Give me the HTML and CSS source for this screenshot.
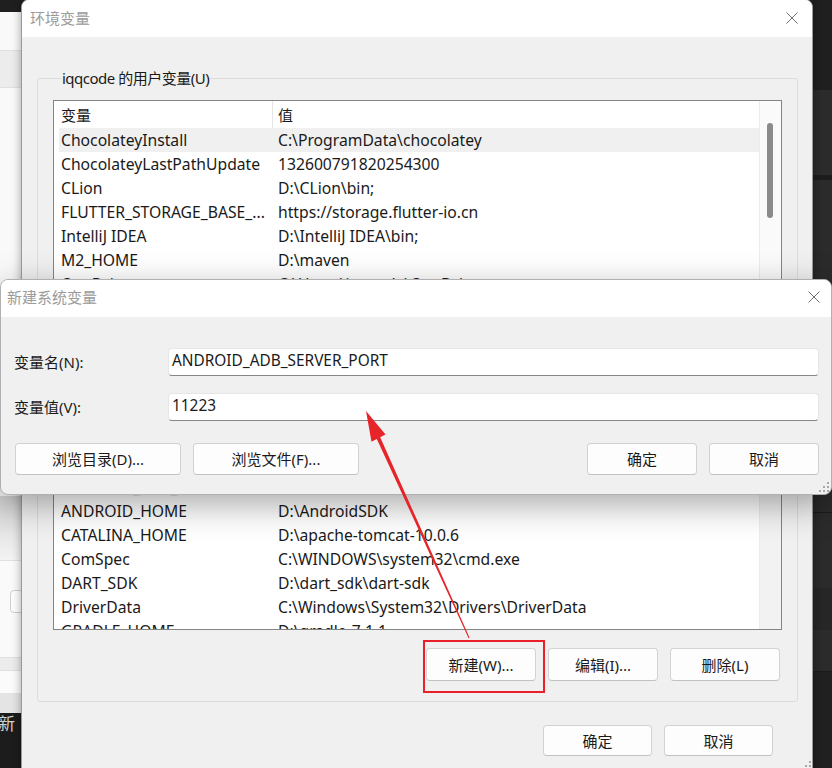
FILE: index.html
```html
<!DOCTYPE html>
<html lang="zh-CN">
<head>
<meta charset="utf-8">
<title>环境变量</title>
<link rel="stylesheet" href="styles.css">
</head>
<body>
<div class="desktop">
  <div class="bg-left">
    <div class="b b-dark12"></div>
    <div class="b b-38"></div>
    <div class="b b-line"></div>
    <div class="b b-36"></div>
    <div class="b b-line"></div>
    <div class="b b-408"></div>
    <div class="b b-64"></div>
    <div class="b b-line"></div>
    <div class="b b-96"><div class="bg-btn"></div></div>
    <div class="b b-line"></div>
    <div class="b b-12"></div>
    <div class="b b-line"></div>
    <div class="b b-22"></div>
    <div class="b b-20"></div>
    <div class="b b-55"><span class="bg-new">新</span></div>
  </div>
  <div class="bg-right">
    <div class="r r-90"></div>
    <div class="r r-85"></div>
    <div class="r r-5"></div>
    <div class="r r-332"></div>
    <div class="r r-1"></div>
    <div class="r r-75"></div>
    <div class="r r-42"></div>
    <div class="r r-41"></div>
    <div class="r r-1"></div>
    <div class="r r-rest"></div>
  </div>

  <div class="win win-main">
    <div class="titlebar">
      <span class="title">环境变量</span>
      <svg class="close" width="12" height="12" viewBox="0 0 12 12"><path d="M0.5 0.5L11.5 11.5M11.5 0.5L0.5 11.5" stroke="#707070" stroke-width="1" fill="none"/></svg>
    </div>
    <div class="main-body">
      <fieldset class="group group-user">
        <legend>iqqcode 的用户变量(U)</legend>
        <div class="list list-user">
          <div class="list-main">
            <div class="lhead"><span class="c1">变量</span><span class="c2">值</span></div>
            <div class="lrow sel"><span class="c1">ChocolateyInstall</span><span class="c2">C:\ProgramData\chocolatey</span></div>
            <div class="lrow"><span class="c1">ChocolateyLastPathUpdate</span><span class="c2">132600791820254300</span></div>
            <div class="lrow"><span class="c1">CLion</span><span class="c2">D:\CLion\bin;</span></div>
            <div class="lrow"><span class="c1">FLUTTER_STORAGE_BASE_...</span><span class="c2">https://storage.flutter-io.cn</span></div>
            <div class="lrow"><span class="c1">IntelliJ IDEA</span><span class="c2">D:\IntelliJ IDEA\bin;</span></div>
            <div class="lrow"><span class="c1">M2_HOME</span><span class="c2">D:\maven</span></div>
            <div class="lrow"><span class="c1">OneDrive</span><span class="c2">C:\Users\iqqcode\OneDrive</span></div>
            <div class="lrow"><span class="c1">Path</span><span class="c2">D:\Python\Scripts\;D:\Python\</span></div>
          </div>
          <div class="vscroll"><div class="thumb"></div></div>
        </div>
      </fieldset>

      <fieldset class="group group-sys">
        <legend>系统变量(S)</legend>
        <div class="list list-sys">
          <div class="list-main">
            <div class="lhead"><span class="c1">变量</span><span class="c2">值</span></div>
            <div class="lrow"><span class="c1">ACSetupSvcPort</span><span class="c2">23210</span></div>
            <div class="lrow"><span class="c1">ACSvcPort</span><span class="c2">17532</span></div>
            <div class="lrow"><span class="c1">ANDROID_ADB_HOME</span><span class="c2">D:\AndroidSDK\platform-tools</span></div>
            <div class="lrow"><span class="c1">ANDROID_AVD_HOME</span><span class="c2">D:\AndroidAVD</span></div>
            <div class="lrow"><span class="c1">ANDROID_HOME</span><span class="c2">D:\AndroidSDK</span></div>
            <div class="lrow"><span class="c1">CATALINA_HOME</span><span class="c2">D:\apache-tomcat-10.0.6</span></div>
            <div class="lrow"><span class="c1">ComSpec</span><span class="c2">C:\WINDOWS\system32\cmd.exe</span></div>
            <div class="lrow"><span class="c1">DART_SDK</span><span class="c2">D:\dart_sdk\dart-sdk</span></div>
            <div class="lrow"><span class="c1">DriverData</span><span class="c2">C:\Windows\System32\Drivers\DriverData</span></div>
            <div class="lrow"><span class="c1">GRADLE_HOME</span><span class="c2">D:\gradle-7.1.1</span></div>
          </div>
          <div class="vscroll vscroll-sys"></div>
        </div>
        <div class="btn-row">
          <button class="btn btn-sm">新建(W)...</button>
          <button class="btn btn-sm">编辑(I)...</button>
          <button class="btn btn-sm">删除(L)</button>
        </div>
      </fieldset>

      <div class="footer">
        <button class="btn btn-foot">确定</button>
        <button class="btn btn-foot">取消</button>
      </div>
    </div>
    <svg class="grip grip-main" width="10" height="10" viewBox="0 0 10 10"><g fill="#a8a8a8"><rect x="8" y="0" width="2" height="2"/><rect x="4" y="4" width="2" height="2"/><rect x="8" y="4" width="2" height="2"/><rect x="0" y="8" width="2" height="2"/><rect x="4" y="8" width="2" height="2"/><rect x="8" y="8" width="2" height="2"/></g></svg>
  </div>

  <div class="win win-new">
    <div class="titlebar titlebar-new">
      <span class="title">新建系统变量</span>
      <svg class="close" width="12" height="12" viewBox="0 0 12 12"><path d="M0.5 0.5L11.5 11.5M11.5 0.5L0.5 11.5" stroke="#707070" stroke-width="1" fill="none"/></svg>
    </div>
    <div class="new-body">
      <div class="form">
        <label class="flabel">变量名(N):</label>
        <div class="input">ANDROID_ADB_SERVER_PORT</div>
        <label class="flabel">变量值(V):</label>
        <div class="input">11223</div>
      </div>
      <div class="new-btns">
        <div class="btn-group">
          <button class="btn btn-wide">浏览目录(D)...</button>
          <button class="btn btn-wide">浏览文件(F)...</button>
        </div>
        <div class="btn-group">
          <button class="btn btn-sm">确定</button>
          <button class="btn btn-sm">取消</button>
        </div>
      </div>
    </div>
    <svg class="grip grip-new" width="10" height="10" viewBox="0 0 10 10"><g fill="#a8a8a8"><rect x="8" y="0" width="2" height="2"/><rect x="4" y="4" width="2" height="2"/><rect x="8" y="4" width="2" height="2"/><rect x="0" y="8" width="2" height="2"/><rect x="4" y="8" width="2" height="2"/><rect x="8" y="8" width="2" height="2"/></g></svg>
  </div>

  <div class="red-box"></div>
  <svg class="arrow" width="832" height="768" viewBox="0 0 832 768">
    <polygon fill="#e8242b" points="366,411 385.5,434.5 380.2,437.3 469.6,637.8 468.6,638.2 376.8,438.9 371.5,441.7"/>
  </svg>
</div>
</body>
</html>
```

FILE: styles.css
```css
* { box-sizing: border-box; margin: 0; padding: 0; }
html, body { width: 832px; height: 768px; overflow: hidden; }
body {
  font-family: "Noto Sans", "Noto Sans CJK SC", sans-serif;
  font-size: 15px;
  color: #1a1a1a;
  background: #2a2a2a;
}
.desktop { position: relative; width: 832px; height: 768px; overflow: hidden; }

/* background application on the left */
.bg-left { position: absolute; left: 0; top: 0; width: 40px; height: 768px; display: flex; flex-direction: column; }
.b { flex: none; position: relative; }
.b-dark12 { height: 12px; background: #1f1f1f; }
.b-38 { height: 38px; background: #f9f9f9; }
.b-line { height: 1px; background: #e0e0e0; }
.b-36 { height: 36px; background: #ececec; }
.b-408 { height: 408px; background: #f9f9f9; }
.b-64 { height: 64px; background: linear-gradient(#d4d4d4, #f3f3f3); }
.b-96 { height: 96px; background: #fafafa; }
.b-12 { height: 12px; background: #ececec; }
.b-22 { height: 22px; background: #fbfbfb; }
.b-20 { height: 20px; background: #e4e4e4; }
.b-55 { height: 55px; background: #1c1c1c; }
.bg-btn { margin: 29px 0 0 10px; width: 24px; height: 23px; border: 1px solid #cfcfcf; border-radius: 4px; background: #fdfdfd; }
.bg-new { display: block; margin: 1px 0 0 -2px; color: #d0d0d0; font-family: "Noto Sans CJK SC", sans-serif; font-size: 17px; line-height: 18px; }

/* background on the right */
.bg-right { position: absolute; left: 806px; top: 0; width: 26px; height: 768px; display: flex; flex-direction: column; }
.r { flex: none; }
.r-90 { height: 90px; background: #1f1f1f; }
.r-85 { height: 85px; background: #2b2b2b; }
.r-5 { height: 5px; background: #1c1c1c; }
.r-332 { height: 332px; background: #2b2b2b; }
.r-1 { height: 1px; background: #1a1a1a; }
.r-75 { height: 75px; background: #2b2b2b; }
.r-42 { height: 42px; background: #262626; }
.r-41 { height: 41px; background: #2b2b2b; }
.r-rest { flex: 1; background: #202020; }

/* windows */
.win { position: absolute; background: #f0f0f0; display: flex; flex-direction: column; }
.win-main {
  left: 21px; top: -1px; width: 792px; height: 800px;
  border: 1px solid #9a9a9a; border-radius: 8px 8px 0 0;
  box-shadow: 0 0 10px rgba(0,0,0,0.35);
}
.titlebar {
  flex: none; height: 37px; background: #ffffff;
  border-radius: 7px 7px 0 0;
  display: flex; align-items: center; justify-content: space-between;
  padding: 0 14px 2px 8px;
}
.title { color: #9b9b9b; font-family: "Noto Sans CJK SC", sans-serif; font-size: 15px; line-height: 20px; }
.close { display: block; flex: none; }

.main-body { flex: 1; padding: 31px 14px 0 15px; display: flex; flex-direction: column; }
.group {
  border: 1px solid #dcdcdc; border-radius: 3px;
  padding: 0 15px; min-width: 0;
}
.group legend {
  margin-left: 8px; padding: 0 1px;
  font-size: 15px; line-height: 20px; color: #1a1a1a; letter-spacing: -0.5px;
}
.group-user { height: 260px; }
.group-sys { margin-top: 15px; }

.list {
  margin-top: 12px; background: #ffffff; border: 1px solid #848484;
  display: flex; overflow: hidden;
}
.list-user { height: 220px; }
.list-sys { height: 255px; }
.list-main { flex: 1; min-width: 0; padding-left: 5px; }
.lhead, .lrow { display: grid; grid-template-columns: 213px 1fr; white-space: nowrap; }
.lhead { height: 27px; line-height: 28px; }
.lhead .c1 { padding-left: 2px; }
.lhead .c2 { padding-left: 5px; border-left: 1px solid #e5e5e5; }
.lrow { height: 24px; line-height: 24px; font-size: 15.7px; }
.lrow .c1 { padding-left: 2px; overflow: hidden; }
.lrow .c2 { padding-left: 6px; overflow: hidden; }
.lrow.sel { background: #f0f0f0; }
.vscroll { flex: none; width: 22px; border-left: 1px solid #ececec; background: #fafafa; padding: 22px 0 0 7px; }
.vscroll-sys { background: #f2f2f2; }
.thumb { width: 6px; height: 95px; background: #8b8b8b; border-radius: 3px; }

.btn-row { display: flex; justify-content: flex-end; gap: 12px; margin: 18px 2px 20px 0; }
.btn {
  font-family: "Noto Sans", "Noto Sans CJK SC", sans-serif;
  font-size: 15px; color: #1a1a1a;
  background: #fdfdfd; border: 1px solid #d2d2d2; border-bottom-color: #c2c2c2;
  border-radius: 4px; display: flex; align-items: center; justify-content: center;
  line-height: 20px;
}
.btn-sm { width: 110px; height: 33px; }
.footer { display: flex; justify-content: flex-end; gap: 12px; margin-top: 23px; padding-right: 25px; }
.btn-foot { width: 109px; height: 31px; }

.grip { position: absolute; display: block; }
.grip-main { right: 1px; top: 761px; }
.grip-new { right: 2px; bottom: 2px; }

/* new variable dialog */
.win-new {
  left: 0; top: 279px; width: 832px; height: 216px;
  border: 1px solid #b0b0b0; border-radius: 8px;
  box-shadow: 0 10px 34px rgba(0,0,0,0.34);
}
.titlebar-new { height: 37px; padding: 0 11px 3px 6px; }
.new-body { flex: 1; padding: 31px 12px 0 13px; display: flex; flex-direction: column; }
.form { display: grid; grid-template-columns: 154px 1fr; row-gap: 17px; align-items: center; }
.flabel { font-size: 15px; line-height: 20px; }
.input {
  height: 28px; background: #ffffff; border: 1px solid #e6e6e6; border-bottom-color: #878787;
  border-radius: 4px; padding-left: 3px; line-height: 24px; white-space: nowrap; font-size: 15.4px;
}
.new-btns { display: flex; justify-content: space-between; margin-top: 22px; padding-left: 1px; }
.btn-group { display: flex; gap: 12px; }
.btn-wide { width: 166px; height: 32px; }
.new-btns .btn-sm { height: 32px; }

/* annotations */
.red-box { position: absolute; left: 423px; top: 640px; width: 122px; height: 53px; border: 2px solid #e8202a; }
.arrow { position: absolute; left: 0; top: 0; pointer-events: none; }
```
